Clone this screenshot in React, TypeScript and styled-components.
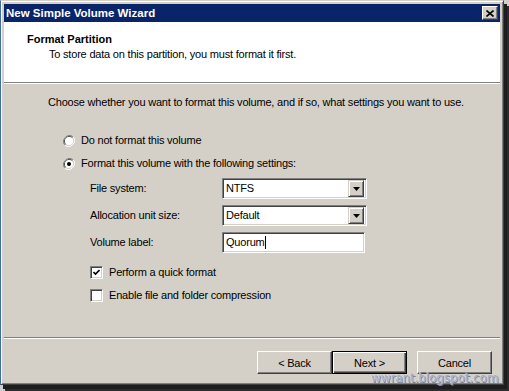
import React from 'react';
import styled, { createGlobalStyle } from 'styled-components';

const GlobalStyle = createGlobalStyle`
  html, body {
    margin: 0;
    padding: 0;
    background: #d8d8d8;
  }
  body {
    font-family: "Liberation Sans", Arial, sans-serif;
    font-size: 11px;
    letter-spacing: -0.2px;
    color: #000;
  }
`;

const Screen = styled.div`
  position: relative;
  width: 509px;
  height: 391px;
  overflow: hidden;
  background: #cfcfcf;
`;

const Window = styled.div`
  box-sizing: border-box;
  width: 504px;
  height: 385px;
  display: flex;
  flex-direction: column;
  padding: 3px;
  background: #d4d0c8;
  border: 1px solid;
  border-color: #d4d0c8 #404040 #404040 #3a6ea5;
  box-shadow: inset 1px 1px #fff, inset -1px -1px #808080, 3px 4px 0 #1e1e1e, 5px 6px 0 #2c2c2c;
`;

const TitleBar = styled.div`
  height: 18px;
  display: flex;
  align-items: center;
  justify-content: space-between;
  padding: 0 2px 0 2px;
  background: #0a246a;
  flex-shrink: 0;
`;

const Title = styled.span`
  color: #fff;
  font-weight: bold;
  font-size: 11.5px;
  letter-spacing: 0;
`;

const CloseButton = styled.div`
  box-sizing: border-box;
  width: 16px;
  height: 14px;
  display: flex;
  align-items: center;
  justify-content: center;
  background: #d4d0c8;
  border: 1px solid;
  border-color: #fff #404040 #404040 #fff;
  box-shadow: inset -1px -1px #808080;
`;

const Header = styled.div`
  height: 60px;
  background: #fff;
  padding: 11px 0 0 23px;
  box-sizing: border-box;
  flex-shrink: 0;
`;

const HeaderTitle = styled.div`
  font-weight: bold;
  line-height: 13px;
  letter-spacing: 0;
`;

const HeaderSubtitle = styled.div`
  margin: 2px 0 0 22px;
  line-height: 13px;
`;

const Divider = styled.div`
  height: 1px;
  background: #808080;
  border-bottom: 1px solid #fff;
  flex-shrink: 0;
`;

const Body = styled.div`
  flex: 1;
  padding: 12px 0 0 44px;
  line-height: 13px;
`;

const RadioGroup = styled.div`
  display: flex;
  flex-direction: column;
  gap: 10px;
  margin: 25px 0 0 15px;
`;

const OptionRow = styled.label`
  display: flex;
  align-items: center;
  gap: 6px;
  height: 13px;
`;

const RadioMark = styled.svg`
  width: 12px;
  height: 12px;
  flex-shrink: 0;
`;

const SettingsGrid = styled.div`
  display: grid;
  grid-template-columns: 132px auto;
  grid-auto-rows: 21px;
  row-gap: 6px;
  align-items: center;
  margin: 8px 0 0 42px;
`;

const Sunken = styled.div<{ $width: number }>`
  box-sizing: border-box;
  width: ${(p) => p.$width}px;
  height: 21px;
  display: flex;
  align-items: center;
  background: #fff;
  border: 1px solid;
  border-color: #808080 #fff #fff #808080;
  box-shadow: inset 1px 1px #404040, inset -1px -1px #d4d0c8;
  padding: 2px;
`;

const FieldText = styled.span`
  flex: 1;
  padding-left: 1px;
`;

const Caret = styled.span`
  display: inline-block;
  width: 1px;
  height: 13px;
  background: #000;
  vertical-align: middle;
  margin-left: 0;
`;

const DropButton = styled.div`
  box-sizing: border-box;
  width: 16px;
  height: 17px;
  display: flex;
  align-items: center;
  justify-content: center;
  background: #d4d0c8;
  border: 1px solid;
  border-color: #d4d0c8 #404040 #404040 #d4d0c8;
  box-shadow: inset 1px 1px #fff, inset -1px -1px #808080;
`;

const CheckGroup = styled.div`
  display: flex;
  flex-direction: column;
  gap: 10px;
  margin: 13px 0 0 42px;
`;

const CheckBox = styled.div`
  box-sizing: border-box;
  width: 13px;
  height: 13px;
  flex-shrink: 0;
  display: flex;
  align-items: center;
  justify-content: center;
  background: #fff;
  border: 1px solid;
  border-color: #808080 #fff #fff #808080;
  box-shadow: inset 1px 1px #404040, inset -1px -1px #d4d0c8;
`;

const Footer = styled.div`
  height: 42px;
  display: flex;
  justify-content: flex-end;
  padding: 12px 8px 0 0;
  box-sizing: border-box;
  flex-shrink: 0;
`;

const Button = styled.div<{ $default?: boolean; $gap?: number }>`
  box-sizing: border-box;
  width: 75px;
  height: 23px;
  margin-left: ${(p) => p.$gap ?? 0}px;
  display: flex;
  align-items: center;
  justify-content: center;
  background: #d4d0c8;
  border: 1px solid;
  border-color: ${(p) => (p.$default ? '#000' : '#fff #404040 #404040 #fff')};
  box-shadow: ${(p) =>
    p.$default
      ? 'inset 1px 1px #fff, inset -1px -1px #404040, inset -2px -2px #808080'
      : 'inset -1px -1px #808080'};
`;

const Watermark = styled.div`
  position: absolute;
  left: 371px;
  top: 371px;
  font-family: "DejaVu Sans", Verdana, sans-serif;
  font-size: 12px;
  letter-spacing: -0.1px;
  color: #a2a8c0;
  text-shadow: 0 0 1px #fff, 1px 1px 0 #70768c;
`;

const Radio = ({ checked }: { checked?: boolean }) => (
  <RadioMark viewBox="0 0 12 12">
    <path d="M10.2 1.8 A6 6 0 0 0 1.8 10.2" fill="none" stroke="#808080" strokeWidth="1" />
    <path d="M1.8 10.2 A6 6 0 0 0 10.2 1.8" fill="none" stroke="#fff" strokeWidth="1" />
    <path d="M9.5 2.5 A5 5 0 0 0 2.5 9.5" fill="none" stroke="#404040" strokeWidth="1" />
    <path d="M2.5 9.5 A5 5 0 0 0 9.5 2.5" fill="none" stroke="#d4d0c8" strokeWidth="1" />
    <circle cx="6" cy="6" r="4" fill="#fff" />
    {checked && <circle cx="6" cy="6" r="2" fill="#000" />}
  </RadioMark>
);

const Arrow = () => (
  <svg width="7" height="4" viewBox="0 0 7 4">
    <path d="M0 0h7L3.5 4z" fill="#000" />
  </svg>
);

const Combo = ({ value }: { value: string }) => (
  <Sunken $width={145}>
    <FieldText>{value}</FieldText>
    <DropButton>
      <Arrow />
    </DropButton>
  </Sunken>
);

export default function App() {
  return (
    <>
      <GlobalStyle />
      <Screen>
        <Window>
          <TitleBar>
            <Title>New Simple Volume Wizard</Title>
            <CloseButton>
              <svg width="8" height="7" viewBox="0 0 8 7">
                <path d="M0.5 0.5l7 6M7.5 0.5l-7 6" stroke="#000" strokeWidth="1.6" />
              </svg>
            </CloseButton>
          </TitleBar>
          <Header>
            <HeaderTitle>Format Partition</HeaderTitle>
            <HeaderSubtitle>To store data on this partition, you must format it first.</HeaderSubtitle>
          </Header>
          <Divider />
          <Body>
            <div>Choose whether you want to format this volume, and if so, what settings you want to use.</div>
            <RadioGroup>
              <OptionRow>
                <Radio />
                Do not format this volume
              </OptionRow>
              <OptionRow>
                <Radio checked />
                Format this volume with the following settings:
              </OptionRow>
            </RadioGroup>
            <SettingsGrid>
              <span>File system:</span>
              <Combo value="NTFS" />
              <span>Allocation unit size:</span>
              <Combo value="Default" />
              <span>Volume label:</span>
              <Sunken $width={143}>
                <FieldText>
                  Quorum
                  <Caret />
                </FieldText>
              </Sunken>
            </SettingsGrid>
            <CheckGroup>
              <OptionRow>
                <CheckBox>
                  <svg width="7" height="7" viewBox="0 0 7 7">
                    <path d="M0.5 3l2 2 4-4" fill="none" stroke="#000" strokeWidth="1.6" />
                  </svg>
                </CheckBox>
                Perform a quick format
              </OptionRow>
              <OptionRow>
                <CheckBox />
                Enable file and folder compression
              </OptionRow>
            </CheckGroup>
          </Body>
          <Divider />
          <Footer>
            <Button>&lt; Back</Button>
            <Button $default>Next &gt;</Button>
            <Button $gap={10}>Cancel</Button>
          </Footer>
        </Window>
        <Watermark>wwrant.blogspot.com</Watermark>
      </Screen>
    </>
  );
}
